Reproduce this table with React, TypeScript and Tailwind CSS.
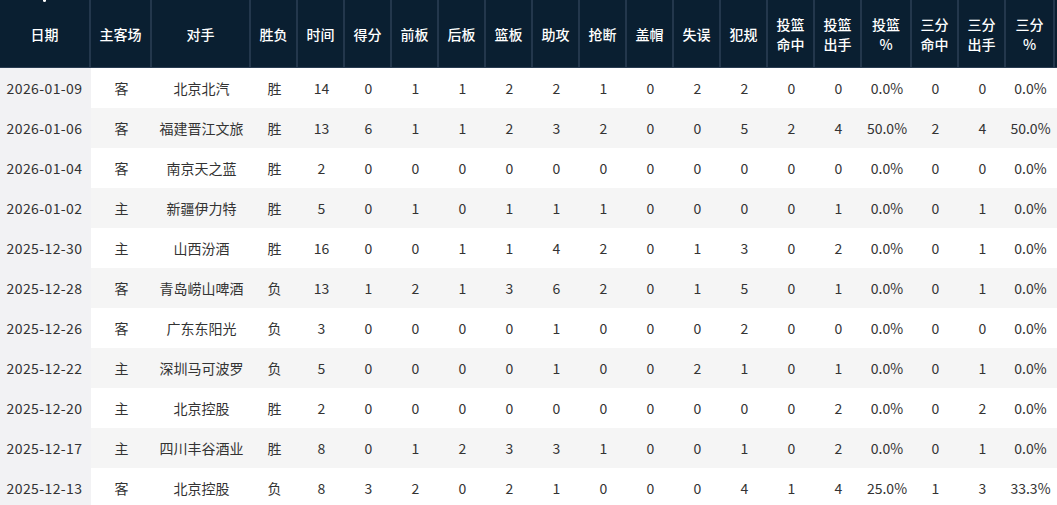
import React from 'react';

const cols = 'grid grid-cols-[91px_61px_99px_repeat(13,47px)_50px_47px_47px_49px_60px]';

const headers: string[][] = [
  ['日期'], ['主客场'], ['对手'], ['胜负'], ['时间'], ['得分'], ['前板'], ['后板'], ['篮板'],
  ['助攻'], ['抢断'], ['盖帽'], ['失误'], ['犯规'], ['投篮', '命中'], ['投篮', '出手'],
  ['投篮', '%'], ['三分', '命中'], ['三分', '出手'], ['三分', '%'],
];

const rows: (string | number)[][] = [
  ['2026-01-09', '客', '北京北汽', '胜', 14, 0, 1, 1, 2, 2, 1, 0, 2, 2, 0, 0, '0.0%', 0, 0, '0.0%'],
  ['2026-01-06', '客', '福建晋江文旅', '胜', 13, 6, 1, 1, 2, 3, 2, 0, 0, 5, 2, 4, '50.0%', 2, 4, '50.0%'],
  ['2026-01-04', '客', '南京天之蓝', '胜', 2, 0, 0, 0, 0, 0, 0, 0, 0, 0, 0, 0, '0.0%', 0, 0, '0.0%'],
  ['2026-01-02', '主', '新疆伊力特', '胜', 5, 0, 1, 0, 1, 1, 1, 0, 0, 0, 0, 1, '0.0%', 0, 1, '0.0%'],
  ['2025-12-30', '主', '山西汾酒', '胜', 16, 0, 0, 1, 1, 4, 2, 0, 1, 3, 0, 2, '0.0%', 0, 1, '0.0%'],
  ['2025-12-28', '客', '青岛崂山啤酒', '负', 13, 1, 2, 1, 3, 6, 2, 0, 1, 5, 0, 1, '0.0%', 0, 1, '0.0%'],
  ['2025-12-26', '客', '广东东阳光', '负', 3, 0, 0, 0, 0, 1, 0, 0, 0, 2, 0, 0, '0.0%', 0, 0, '0.0%'],
  ['2025-12-22', '主', '深圳马可波罗', '负', 5, 0, 0, 0, 0, 1, 0, 0, 2, 1, 0, 1, '0.0%', 0, 1, '0.0%'],
  ['2025-12-20', '主', '北京控股', '胜', 2, 0, 0, 0, 0, 0, 0, 0, 0, 0, 0, 2, '0.0%', 0, 2, '0.0%'],
  ['2025-12-17', '主', '四川丰谷酒业', '胜', 8, 0, 1, 2, 3, 3, 1, 0, 0, 1, 0, 2, '0.0%', 0, 1, '0.0%'],
  ['2025-12-13', '客', '北京控股', '负', 8, 3, 2, 0, 2, 1, 0, 0, 0, 4, 1, 4, '25.0%', 1, 3, '33.3%'],
];

export default function App() {
  return (
    <div
      className="w-[1057px] h-[505px] overflow-hidden bg-white text-[14px] text-[#333]"
      style={{ fontFamily: '"Noto Sans CJK SC", "Noto Sans", sans-serif' }}
    >
      <div className="w-max">
        <div className={`${cols} relative h-[68px] bg-[#0a1f31] border-b border-[#2a3d52]`}>
          <span className="absolute left-[43px] top-0 w-[3px] h-[2px] rounded-b-full bg-white" />
          {headers.map((h, i) => (
            <div
              key={i}
              className="flex flex-col items-center justify-center border-r-2 border-[#23374c] text-white font-medium leading-[20px]"
            >
              {h.map((line, j) => (
                <span key={j}>{line}</span>
              ))}
            </div>
          ))}
          <div />
        </div>

        {rows.map((r, ri) => (
          <div key={ri} className={`${cols} h-[40px] ${ri % 2 === 1 ? 'bg-[#f5f5f5]' : 'bg-white'}`}>
            {r.map((v, ci) => (
              <div
                key={ci}
                className={`flex items-center justify-center leading-none ${ci === 0 ? 'bg-[#f2f2f4] pr-[2px] tracking-[0.4px]' : ''}`}
              >
                {v}
              </div>
            ))}
            <div />
          </div>
        ))}
      </div>
    </div>
  );
}
